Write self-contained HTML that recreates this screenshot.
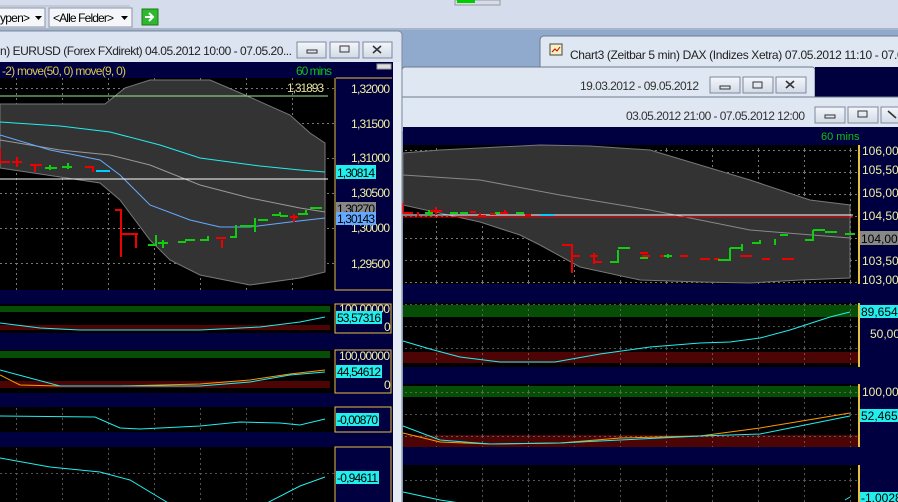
<!DOCTYPE html>
<html><head><style>
body{margin:0;width:898px;height:502px;overflow:hidden;background:#8faacc;font-family:"Liberation Sans",sans-serif}
svg{position:absolute;left:0;top:0}
</style></head><body>
<svg width="898" height="502" viewBox="0 0 898 502" font-family="Liberation Sans, sans-serif" font-size="11">
<defs>
<linearGradient id="btn" x1="0" y1="0" x2="0" y2="1"><stop offset="0" stop-color="#f4f7fb"/><stop offset="1" stop-color="#d2dae6"/></linearGradient>
<pattern id="gl" width="46" height="35" patternUnits="userSpaceOnUse" x="-30" y="88"><line x1="0.5" y1="0" x2="0.5" y2="35" stroke="#777" stroke-dasharray="2,3"/><line x1="0" y1="0.5" x2="46" y2="0.5" stroke="#777" stroke-dasharray="2,3"/></pattern>
<pattern id="gr" width="46" height="22" patternUnits="userSpaceOnUse" x="436" y="150"><line x1="0.5" y1="0" x2="0.5" y2="22" stroke="#777" stroke-dasharray="2,3"/><line x1="0" y1="0.5" x2="46" y2="0.5" stroke="#777" stroke-dasharray="2,3"/></pattern>
</defs>
<!-- toolbar -->
<rect x="0" y="0" width="898" height="30" fill="#d5dcec"/>
<rect x="0" y="28" width="898" height="2" fill="#a8b4c8"/>
<line x1="0" y1="6" x2="130" y2="6" stroke="#b0b8c8"/>
<rect x="455" y="0" width="45" height="5" fill="none" stroke="#999"/><rect x="457" y="0" width="18" height="3" fill="#0c0"/>
<rect x="-1" y="8" width="46" height="19" fill="#f4f6fa" stroke="#8a94a6"/>
<text x="0" y="22" font-size="12" textLength="30">ypen&gt;</text><path d="M35 16h7l-3.5 4z" fill="#000"/>
<rect x="49" y="8" width="83" height="19" fill="#f4f6fa" stroke="#8a94a6"/>
<text x="53" y="22" font-size="12" textLength="61">&lt;Alle Felder&gt;</text><path d="M121 16h7l-3.5 4z" fill="#000"/>
<rect x="142" y="9" width="16" height="16" fill="#2fb82f" stroke="#1a7a1a"/><path d="M145 17h7M149 13l4 4-4 4" stroke="#fff" stroke-width="2" fill="none"/>

<!-- right windows -->
<rect x="540" y="36" width="370" height="40" rx="4" fill="#dfe7f2" stroke="#6e7b8f"/>
<rect x="550" y="44" width="12" height="11" fill="#f4f0c0" stroke="#444"/><path d="M552 52l3-3 2 2 3-4" stroke="#c00" fill="none"/>
<text x="570" y="59" font-size="12" fill="#222" textLength="340">Chart3 (Zeitbar 5 min)  DAX (Indizes Xetra) 07.05.2012 11:10 - 07.05</text>
<rect x="402" y="67" width="413" height="40" rx="3" fill="#dfe7f2" stroke="#6e7b8f"/>
<rect x="815" y="67" width="83" height="33" fill="#00003f"/>
<text x="580" y="90" font-size="12" fill="#333" textLength="119">19.03.2012 - 09.05.2012</text>
<rect x="710" y="77" width="30" height="16" fill="url(#btn)" stroke="#7d889b"/><rect x="743" y="77" width="30" height="16" fill="url(#btn)" stroke="#7d889b"/><rect x="776" y="77" width="30" height="16" fill="url(#btn)" stroke="#7d889b"/>
<rect x="720" y="86" width="10" height="3" fill="none" stroke="#333"/><rect x="753" y="82" width="9" height="6" fill="none" stroke="#333"/><path d="M786 81l8 7M794 81l-8 7" stroke="#333" stroke-width="1.6"/>
<rect x="402" y="97" width="500" height="35" fill="#dfe7f2" stroke="#6e7b8f"/>
<text x="626" y="120" font-size="12" fill="#333" textLength="179">03.05.2012 21:00 - 07.05.2012 12:00</text>
<rect x="815" y="107" width="30" height="16" fill="url(#btn)" stroke="#7d889b"/><rect x="848" y="107" width="30" height="16" fill="url(#btn)" stroke="#7d889b"/><rect x="881" y="107" width="30" height="16" fill="url(#btn)" stroke="#7d889b"/>
<rect x="825" y="115" width="10" height="3" fill="none" stroke="#333"/><rect x="858" y="111" width="9" height="6" fill="none" stroke="#333"/><path d="M888 111l8 7" stroke="#333" stroke-width="1.6"/>
<!-- right chart -->
<rect x="403" y="127" width="495" height="375" fill="#000040"/>
<text x="821" y="140" fill="#11c011">60 mins</text>
<rect x="403" y="145" width="455" height="139" fill="#000"/>
<rect x="403" y="145" width="455" height="139" fill="url(#gr)"/>
<path d="M403 153L440 150L540 145L590 146L650 150L700 165L750 180L810 200L850 205L850 278L800 280L750 283L700 282L640 280L580 267L540 245L520 235L480 222L403 205Z" fill="#333" stroke="#777"/>
<path d="M403 175L480 180L560 195L650 210L750 230L850 238" stroke="#888" fill="none"/>
<line x1="403" y1="215" x2="853" y2="215" stroke="#fff"/>
<line x1="403" y1="217" x2="853" y2="217" stroke="#e00"/>
<path d="M403 203v10h10M418 216v-4M430 211h12M436 207v8M470 212h6M478 216h8M480 213v3M490 214h6M500 213h8M505 210v4M525 215h6" stroke="#e00" stroke-width="2" fill="none"/>
<path d="M425 213h8M429 210v6M450 213h8M460 213h8M495 213h5M516 213h8" stroke="#1c1" stroke-width="2" fill="none"/>
<path d="M540 215h14" stroke="#0cf" stroke-width="2"/>
<path d="M562 245h10v28M572 256h8M590 256h8M594 253v11M594 262h8M714 259h6M640 253h8M642 256h8M660 256h8M680 256h8M700 259h10M740 256h12M762 259h8M782 259h12" stroke="#e00" stroke-width="2" fill="none"/>
<path d="M610 262h8v-12M618 248h12M640 258h8M664 256h8M668 254v4M718 260h12v-12M730 248h12M742 244v7M752 243h8v-3M775 239v6M780 235h8M805 240h8v-10M813 230h12M825 232h12M845 234h10" stroke="#1c1" stroke-width="2" fill="none"/>
<rect x="858" y="145" width="40" height="139" fill="#000040"/><line x1="859" y1="145" x2="859" y2="284" stroke="#e8c040" stroke-width="2"/>
<g fill="#f0f0a0" font-size="12"><text x="862" y="155">106,00</text><text x="862" y="174">105,50</text><text x="862" y="197">105,00</text><text x="862" y="220">104,50</text><text x="862" y="265">103,50</text><text x="862" y="284">103,00</text></g>
<rect x="860" y="231" width="38" height="14" fill="#888"/><text x="861" y="243" font-size="12" fill="#000">104,004</text>
<!-- right panel 2 -->
<rect x="403" y="303" width="455" height="64" fill="#000"/>
<rect x="403" y="305" width="455" height="12" fill="#064d06"/><rect x="403" y="352" width="455" height="11" fill="#4d0404"/>
<rect x="403" y="303" width="455" height="64" fill="url(#gr)" opacity="0.7"/>
<path d="M403 341L430 349L460 357L500 362L555 362L600 354L650 347L700 343L730 342L760 338L790 330L830 317L850 312" stroke="#2ee" fill="none"/>
<rect x="858" y="303" width="40" height="64" fill="#000040"/><line x1="859" y1="303" x2="859" y2="367" stroke="#e8c040" stroke-width="2"/>
<rect x="860" y="305" width="38" height="13" fill="#2ee"/><text x="861" y="316" font-size="12" fill="#000">89,6549</text>
<text x="870" y="338" font-size="12" fill="#f0f0a0">50,00</text>
<!-- right panel 3 -->
<rect x="403" y="384" width="455" height="63" fill="#000"/>
<rect x="403" y="386" width="455" height="11" fill="#064d06"/><rect x="403" y="435" width="455" height="12" fill="#4d0404"/>
<rect x="403" y="384" width="455" height="63" fill="url(#gr)" opacity="0.7"/>
<path d="M403 433L440 442L490 444L560 443L620 438L700 436L760 428L820 418L850 413" stroke="#f90" fill="none"/>
<path d="M403 426L440 440L490 444L560 443L620 440L700 436L760 434L820 422L850 416" stroke="#2ee" fill="none"/>
<rect x="858" y="384" width="40" height="63" fill="#000040"/><line x1="859" y1="384" x2="859" y2="447" stroke="#e8c040" stroke-width="2"/>
<text x="862" y="396" font-size="12" fill="#f0f0a0">100,00</text>
<rect x="860" y="409" width="38" height="13" fill="#2ee"/><text x="861" y="420" font-size="12" fill="#000">52,4656</text>
<!-- right panel 4 -->
<rect x="403" y="465" width="455" height="37" fill="#000"/>
<rect x="403" y="465" width="455" height="37" fill="url(#gr)" opacity="0.7"/>
<path d="M403 492L440 500L460 503M845 500L850 497" stroke="#2ee" fill="none"/>
<rect x="858" y="465" width="40" height="37" fill="#000040"/><line x1="859" y1="465" x2="859" y2="502" stroke="#e8c040" stroke-width="2"/>
<rect x="860" y="492" width="38" height="13" fill="#2ee"/><text x="861" y="502" font-size="12" fill="#000">-1,0028</text>

<!-- left window -->
<rect x="-5" y="31" width="407" height="480" rx="4" fill="#dbe4f0" stroke="#7d8aa0"/>
<text x="0" y="55" font-size="12" fill="#222" textLength="292">n)  EURUSD (Forex FXdirekt) 04.05.2012 10:00 - 07.05.20...</text>
<rect x="297" y="42" width="29" height="16" fill="url(#btn)" stroke="#7d889b"/><rect x="330" y="42" width="29" height="16" fill="url(#btn)" stroke="#7d889b"/><rect x="363" y="42" width="29" height="16" fill="url(#btn)" stroke="#7d889b"/>
<rect x="307" y="50" width="10" height="3" fill="none" stroke="#333"/><rect x="340" y="46" width="9" height="6" fill="none" stroke="#333"/><path d="M373 46l8 7M381 46l-8 7" stroke="#333" stroke-width="1.6"/>
<rect x="0" y="62" width="393" height="440" fill="#000040"/>
<rect x="393" y="62" width="8" height="440" fill="#e6ecf4"/><rect x="377" y="64" width="14" height="5" fill="#ddd" stroke="#999"/>
<text x="2" y="75" font-size="12" fill="#d8c848" textLength="124">-2) move(50, 0) move(9, 0)</text>
<text x="296" y="75" font-size="12" fill="#11c011" textLength="36">60 mins</text>
<rect x="0" y="78" width="335" height="212" fill="#000"/>
<rect x="0" y="78" width="335" height="212" fill="url(#gl)"/>
<path d="M0 104L105 104L125 88L150 80L210 80L245 95L290 115L310 133L325 143L325 272L300 278L250 285L200 275L170 260L150 240L120 200L100 183L0 168Z" fill="#333" stroke="#777"/>
<line x1="0" y1="96" x2="328" y2="96" stroke="#9e9"/>
<text x="287" y="92" font-size="12" fill="#e0e0a0" textLength="37">1,31893</text>
<path d="M0 140L60 150L110 155L150 165L200 185L250 198L300 208L325 212" stroke="#999" fill="none"/>
<path d="M0 122L60 126L110 132L160 145L200 158L260 166L300 170L325 172" stroke="#2ee" fill="none"/>
<path d="M0 135L50 150L100 160L120 175L150 205L190 220L220 227L250 227L290 222L325 218" stroke="#6af" fill="none"/>
<line x1="0" y1="179" x2="328" y2="179" stroke="#fff"/>
<path d="M0 148v14h10M12 162h10M17 157v10M30 165h12M35 166v6M85 167h8v5M115 210h6v47M120 234h18M136 234v14M216 238h10M222 240v8M290 217h8M294 214v8" stroke="#e00" stroke-width="2" fill="none"/>
<path d="M45 168h12M50 165v5M62 167h10M68 163v6M148 245h8v-10M158 243h10M163 240v8M178 242h8M185 240h10M200 240h8v-4M230 237h6v-12M240 226h16M255 218v14M258 220h10M272 215h8v-3M280 216h8M298 214h10M306 210v4M310 208h12" stroke="#1c1" stroke-width="2" fill="none"/>
<path d="M96 171h14" stroke="#0cf" stroke-width="2"/>
<rect x="335" y="78" width="58" height="212" fill="#000040"/><path d="M335 78v212h57" stroke="#e8c040" fill="none"/><line x1="336" y1="78" x2="392" y2="78" stroke="#e8c040"/>
<g fill="#f0f0a0" font-size="12"><text x="351" y="93" textLength="39">1,32000</text><text x="351" y="128" textLength="39">1,31500</text><text x="351" y="162" textLength="39">1,31000</text><text x="351" y="197" textLength="39">1,30500</text><text x="351" y="232" textLength="39">1,30000</text><text x="351" y="268" textLength="39">1,29500</text></g>
<rect x="336" y="165" width="40" height="14" fill="#2ee"/><text x="337" y="177" font-size="12" fill="#000" textLength="38">1,30814</text>
<rect x="336" y="202" width="40" height="12" fill="#888"/><text x="337" y="213" font-size="12" fill="#000" textLength="38">1,30270</text>
<rect x="336" y="212" width="40" height="13" fill="#6af"/><text x="337" y="223" font-size="12" fill="#000" textLength="38">1,30143</text>
<!-- left panel 2 -->
<rect x="0" y="304" width="335" height="29" fill="#000"/>
<rect x="0" y="306" width="330" height="6" fill="#064d06"/><rect x="0" y="325" width="330" height="5" fill="#4d0404"/>
<path d="M0 323L40 328L80 330L200 330L260 327L300 322L325 317" stroke="#2ee" fill="none"/>
<rect x="335" y="304" width="56" height="29" fill="#000040" stroke="#e8c040"/>
<text x="339" y="313" font-size="12" fill="#f0f0a0" textLength="51">100,00000</text>
<rect x="336" y="311" width="46" height="13" fill="#2ee"/><text x="337" y="322" font-size="12" fill="#000" textLength="44">53,57316</text>
<text x="384" y="331" font-size="12" fill="#f0f0a0">0</text>
<!-- left panel 3 -->
<rect x="0" y="350" width="335" height="43" fill="#000"/>
<rect x="0" y="351" width="330" height="7" fill="#064d06"/><rect x="0" y="381" width="330" height="7" fill="#4d0404"/>
<path d="M0 375L20 385L60 386L120 386L200 384L250 380L290 374L325 370" stroke="#f90" fill="none"/>
<path d="M0 370L30 378L60 386L200 386L250 382L290 375L325 372" stroke="#2ee" fill="none"/>
<rect x="335" y="350" width="56" height="43" fill="#000040" stroke="#e8c040"/>
<text x="339" y="360" font-size="12" fill="#f0f0a0" textLength="51">100,00000</text>
<rect x="336" y="365" width="46" height="13" fill="#2ee"/><text x="337" y="376" font-size="12" fill="#000" textLength="44">44,54612</text>
<text x="384" y="389" font-size="12" fill="#f0f0a0">0</text>
<!-- left panel 4 -->
<rect x="0" y="407" width="335" height="25" fill="#000"/>
<rect x="0" y="407" width="335" height="25" fill="url(#gl)" opacity="0.7"/>
<path d="M0 416L95 417L120 428L140 429L200 426L240 422L280 423L300 425L325 419" stroke="#2ee" fill="none"/>
<rect x="335" y="407" width="56" height="25" fill="#000040" stroke="#e8c040"/>
<rect x="336" y="413" width="43" height="13" fill="#2ee"/><text x="337" y="424" font-size="12" fill="#000" textLength="41">-0,00870</text>
<!-- left panel 5 -->
<rect x="0" y="447" width="335" height="55" fill="#000"/>
<rect x="0" y="447" width="335" height="55" fill="url(#gl)" opacity="0.7"/>
<path d="M0 458L50 467L100 472L130 480L160 498L170 504M265 504L300 486L325 477" stroke="#2ee" fill="none"/>
<rect x="335" y="447" width="56" height="60" fill="#000040" stroke="#e8c040"/>
<rect x="336" y="471" width="43" height="13" fill="#2ee"/><text x="337" y="482" font-size="12" fill="#000" textLength="41">-0,94611</text>
</svg>
</body></html>
